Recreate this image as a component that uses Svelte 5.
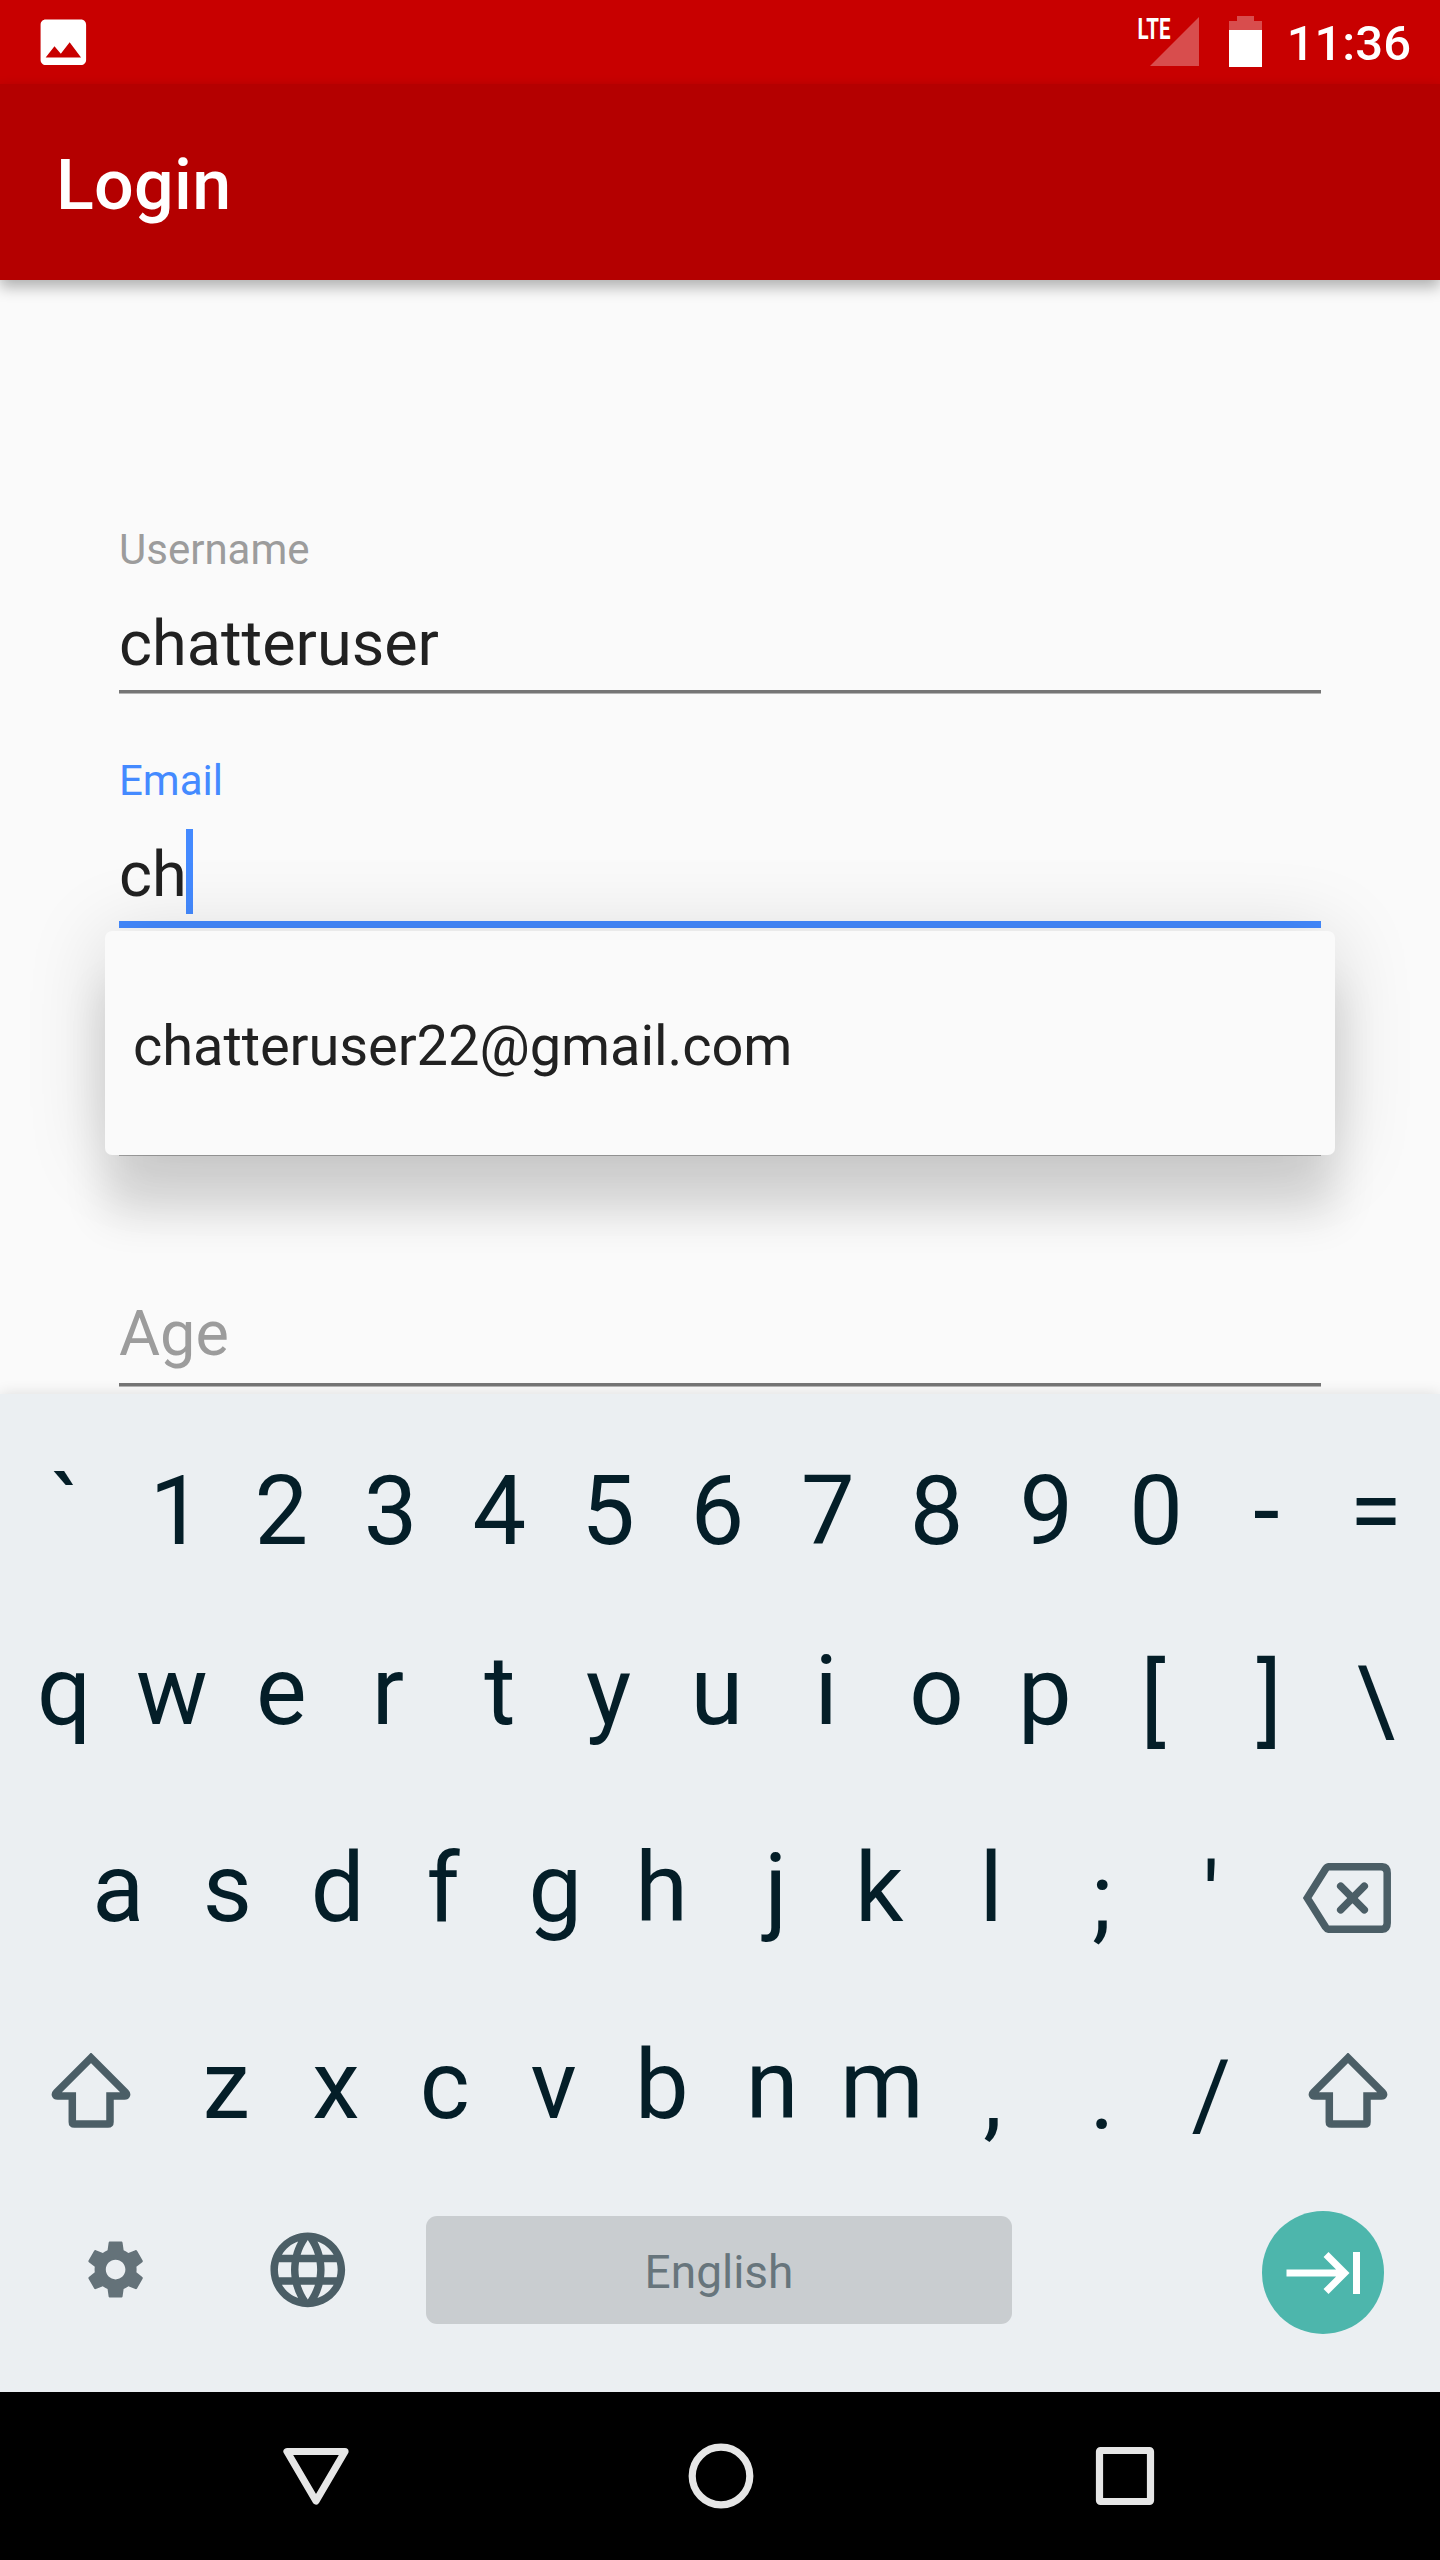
<script>
  const fields = [
    { label: 'Username', value: 'chatteruser' },
    { label: 'Email', value: 'ch', focused: true },
    {},
    { hint: 'Age' },
  ];

  const rows = [
    ['`', '1', '2', '3', '4', '5', '6', '7', '8', '9', '0', '-', '='],
    ['q', 'w', 'e', 'r', 't', 'y', 'u', 'i', 'o', 'p', '[', ']', '\\'],
    ['a', 's', 'd', 'f', 'g', 'h', 'j', 'k', 'l', ';', "'", 'backspace'],
    ['shift', 'z', 'x', 'c', 'v', 'b', 'n', 'm', ',', '.', '/', 'shift'],
  ];

  // Punctuation outside the number row is centred a little lower than letters.
  const isLow = (key) => "[]\\;',./".includes(key);

  const nudges = {
    '`': 1.5, 1: 3, 2: -1.5, 3: -1.5, 4: -2, 5: -2.5, 6: -2.5, 7: -1.5, 8: -2, 9: -1.5, 0: -1,
    w: -1.5, e: -1.5, r: -4, t: -1.5, y: -2, u: -3, i: -3, o: -2, p: -3, '[': -4, ']': 3,
    d: 1, f: -3, h: -3, j: 2, k: -4, l: -1.5,
    z: -1.5, x: -1, c: -1.5, v: -2, b: -3, n: -2, m: -1.5,
  };
</script>

<div class="screen">
  <header class="status">
    <svg class="picture" viewBox="0 0 24 24"><path fill="#fff" d="M21 19V5c0-1.1-.9-2-2-2H5c-1.1 0-2 .9-2 2v14c0 1.1.9 2 2 2h14c1.1 0 2-.9 2-2zM8.500 13.500l2.500 3.010L14.500 12l4.500 6H5l3.500-4.500z" /></svg>
    <svg class="signal" viewBox="0 0 64 84">
      <path fill="#fff" fill-opacity=".3" d="M62 17v49H13z" />
      <text x="0.500" y="39" textLength="33" lengthAdjust="spacingAndGlyphs">LTE</text>
    </svg>
    <svg class="battery" viewBox="0 0 33 84">
      <path fill="#fff" fill-opacity=".3" d="M8 16h17v5h8v9H0v-9h8z" />
      <path fill="#fff" d="M0 30h33v37H0z" />
    </svg>
    <span class="clock">11:36</span>
  </header>

  <div class="appbar"><h1>Login</h1></div>

  <main>
    {#each fields as field}
      <div class="field" class:focused={field.focused}>
        {#if field.label}<div class="label">{field.label}</div>{/if}
        {#if field.value}
          <div class="value">{field.value}{#if field.focused}<i class="caret"></i>{/if}</div>
        {/if}
        {#if field.hint}<div class="value hint">{field.hint}</div>{/if}
        <div class="line"></div>
      </div>
    {/each}
    <div class="popup">chatteruser22@gmail.com</div>
  </main>

  <section class="keyboard">
    {#each rows as row, r}
      <div class="row row{r}">
        {#each row as key}
          {#if key === 'shift'}
            <div class="key wide">
              <svg class="shift" viewBox="0 0 80 76"><path d="M40 4.800 5.500 39.300C3.500 41.300 4.500 43 6.500 43H21.300V69Q21.300 71 23.300 71H57Q59 71 59 69V43H73.500C75.500 43 76.500 41.300 74.500 39.300Z" /></svg>
            </div>
          {:else if key === 'backspace'}
            <div class="key wide">
              <svg class="backspace" viewBox="0 0 88 70">
                <path d="M26 3.700H78Q84.200 3.700 84.200 10V60Q84.200 66.300 78 66.300H26Q24 66.300 22.500 64L4.200 35 22.500 6Q24 3.700 26 3.700Z" />
                <path d="M37.700 23.200 61.300 46.800M61.300 23.200 37.700 46.800" />
              </svg>
            </div>
          {:else}
            <div class="key" class:low={isLow(key)} style:--nudge="{nudges[key] ?? 0}px">{key}</div>
          {/if}
        {/each}
      </div>
    {/each}
    <div class="row tools">
      <div class="tool settings">
        <svg viewBox="0 0 24 24"><path d="M19.430 12.980c.04-.32.07-.64.07-.98s-.03-.66-.07-.98l2.110-1.650c.19-.15.24-.42.12-.64l-2-3.460c-.12-.22-.39-.3-.61-.22l-2.490 1c-.52-.4-1.080-.73-1.690-.98l-.38-2.650C14.460 2.180 14.250 2 14 2h-4c-.25 0-.46.18-.49.42l-.38 2.650c-.61.25-1.170.59-1.690.98l-2.490-1c-.23-.09-.49 0-.61.22l-2 3.460c-.13.22-.07.49.12.64l2.110 1.650c-.04.32-.07.65-.07.98s.03.66.07.98l-2.110 1.650c-.19.15-.24.42-.12.64l2 3.460c.12.22.39.3.61.22l2.490-1c.52.4 1.080.73 1.690.98l.38 2.650c.03.24.24.42.49.42h4c.25 0 .46-.18.49-.42l.38-2.650c.61-.25 1.170-.59 1.690-.98l2.490 1c.23.09.49 0 .61-.22l2-3.460c.12-.22.07-.49-.12-.64l-2.110-1.650zM12 15.500c-1.930 0-3.500-1.570-3.500-3.500s1.570-3.500 3.500-3.500 3.500 1.570 3.500 3.500-1.570 3.500-3.500 3.500z" /></svg>
      </div>
      <div class="tool globe">
        <svg viewBox="0 0 24 24"><path d="M11.990 2C6.470 2 2 6.480 2 12s4.470 10 9.990 10C17.520 22 22 17.520 22 12S17.520 2 11.990 2zm6.930 6h-2.950c-.32-1.250-.78-2.450-1.380-3.560 1.840.63 3.370 1.910 4.330 3.560zM12 4.040c.83 1.200 1.480 2.530 1.910 3.960h-3.820c.43-1.430 1.080-2.760 1.910-3.960zM4.260 14C4.100 13.360 4 12.690 4 12s.1-1.360.26-2h3.380c-.08.66-.14 1.320-.14 2 0 .68.06 1.340.14 2H4.260zm.82 2h2.950c.32 1.250.78 2.450 1.380 3.560-1.840-.63-3.370-1.900-4.330-3.560zm2.950-8H5.080c.96-1.660 2.490-2.930 4.330-3.560C8.810 5.550 8.350 6.750 8.030 8zM12 19.960c-.83-1.200-1.480-2.530-1.910-3.960h3.820c-.43 1.430-1.080 2.760-1.910 3.960zM14.340 14H9.660c-.09-.66-.16-1.320-.16-2 0-.68.07-1.350.16-2h4.680c.09.65.16 1.320.16 2 0 .68-.07 1.340-.16 2zm.25 5.560c.6-1.110 1.060-2.310 1.380-3.560h2.950c-.96 1.650-2.490 2.930-4.330 3.560zM16.360 14c.08-.66.14-1.320.14-2 0-.68-.06-1.340-.14-2h3.380c.16.64.26 1.310.26 2s-.1 1.360-.26 2h-3.380z" /></svg>
      </div>
      <div class="space">English</div>
      <div class="next">
        <svg viewBox="0 0 24 24"><path fill="#fff" d="M11.590 7.410 15.170 11H1v2h14.170l-3.590 3.590L13 18l6-6-6-6-1.410 1.410zM20 6v12h2V6h-2z" /></svg>
      </div>
    </div>
  </section>

  <nav>
    <svg viewBox="0 0 76 76"><path d="M9 13.500H67L38 63Z" /></svg>
    <svg viewBox="0 0 76 76"><circle cx="38" cy="38" r="28.800" /></svg>
    <svg viewBox="0 0 76 76"><rect x="12.500" y="12.500" width="51" height="51" rx="1" /></svg>
  </nav>
</div>

<style>
  :global(body) {
    margin: 0;
  }
  .screen {
    width: 1440px;
    height: 2560px;
    display: flex;
    flex-direction: column;
    overflow: hidden;
    background: #fafafa;
    font-family: Roboto, 'Liberation Sans', sans-serif;
  }
  svg {
    display: block;
    flex: none;
  }
  .status {
    height: 84px;
    flex: none;
    box-sizing: border-box;
    padding: 0 29px 0 33px;
    display: flex;
    align-items: center;
    background: #c80000;
    color: #fff;
  }
  .picture {
    width: 60.700px;
    height: 60.700px;
    margin-right: auto;
  }
  .signal {
    width: 64px;
    height: 84px;
    margin-right: 28px;
  }
  .signal text {
    fill: #fff;
    font: 700 29.500px Roboto, sans-serif;
  }
  .battery {
    width: 33px;
    height: 84px;
    margin-right: 24.500px;
  }
  .clock {
    font-size: 49px;
    font-weight: 500;
    line-height: 88px;
    height: 84px;
  }
  .appbar {
    height: 196px;
    flex: none;
    position: relative;
    z-index: 1;
    background: #b40000;
    color: #fff;
    box-shadow: 0 7px 14px rgba(0, 0, 0, 0.3);
  }
  h1 {
    margin: 0;
    padding: 3px 56px 0;
    font-size: 70px;
    font-weight: 500;
    line-height: 196px;
    letter-spacing: 0.300px;
  }
  main {
    position: relative;
    height: 1114px;
    flex: none;
    box-sizing: border-box;
    padding: 183px 119px 0;
  }
  .field {
    height: 231px;
    display: flex;
    flex-direction: column;
    justify-content: flex-end;
  }
  .label {
    font-size: 42px;
    line-height: 50px;
    margin-bottom: 27px;
    color: #9c9c9c;
  }
  .value {
    display: flex;
    font-size: 63px;
    line-height: 84px;
    height: 84px;
    margin-bottom: 4px;
    color: #212121;
  }
  .hint {
    color: #9c9c9c;
    margin-bottom: 7px;
  }
  .caret {
    width: 7px;
    height: 85px;
    margin: -4px 0 0 -1px;
    background: #448aff;
  }
  .line {
    height: 3px;
    background: #757575;
    border-bottom: 1px solid #b4b4b4;
  }
  .focused .label {
    color: #448aff;
  }
  .focused .line {
    height: 7px;
    border: 0;
    margin-bottom: -3px;
    background: #448aff;
  }
  .popup {
    position: absolute;
    left: 105px;
    top: 651px;
    width: 1230px;
    height: 224px;
    box-sizing: border-box;
    padding-left: 28px;
    border-radius: 7px;
    background: #fafafa;
    color: #212121;
    font-size: 56px;
    line-height: 231px;
    letter-spacing: -0.070px;
    box-shadow:
      0 6px 80px rgba(0, 0, 0, 0.15),
      0 60px 44px rgba(0, 0, 0, 0.12);
  }
  .keyboard {
    position: relative;
    height: 998px;
    flex: none;
    box-sizing: border-box;
    padding: 27px 9.500px 0;
    background: #ebeff2;
    color: #041e28;
    box-shadow: 0 0 14px rgba(0, 0, 0, 0.12);
  }
  .row {
    display: flex;
    height: 197px;
  }
  .row0,
  .row1 {
    height: 180px;
  }
  .row1 {
    margin-bottom: 9px;
  }
  .row2 {
    padding-left: 54px;
  }
  .key {
    flex: 0 0 109.300px;
    box-sizing: border-box;
    text-align: center;
    font-size: 95.500px;
    line-height: 197px;
    transform: translateX(var(--nudge, 0));
  }
  .row0 .key,
  .row1 .key {
    line-height: 180px;
  }
  .low {
    padding-top: 10px;
  }
  .wide {
    flex-basis: 163.500px;
    display: flex;
    align-items: center;
    justify-content: center;
  }
  .shift,
  .backspace {
    fill: none;
    stroke: #4b5e66;
    stroke-width: 7.500px;
  }
  .shift {
    width: 80px;
    height: 76px;
    margin-top: 11px;
  }
  .backspace {
    width: 88px;
    height: 70px;
    margin: 19px 2px 0 0;
    stroke-linecap: round;
  }
  .tools {
    height: 172px;
    align-items: center;
  }
  .tool {
    display: flex;
    justify-content: center;
  }
  .settings {
    width: 212px;
  }
  .settings svg {
    width: 67.200px;
    height: 67.200px;
    fill: #647279;
  }
  .globe {
    width: 173px;
  }
  .globe svg {
    width: 89.600px;
    height: 89.600px;
    fill: #4b5e66;
  }
  .space {
    width: 586px;
    height: 108px;
    margin-left: 31.500px;
    border-radius: 11px;
    background: #c9cdd0;
    color: #67757c;
    font-size: 46px;
    line-height: 112px;
    text-align: center;
  }
  .next {
    width: 122.500px;
    height: 122.500px;
    margin: 5px 0 0 249.500px;
    display: flex;
    align-items: center;
    justify-content: center;
    border-radius: 50%;
    background: #4db6ac;
  }
  .next svg {
    width: 84px;
    height: 84px;
    margin: 1px 0 0 4px;
  }
  nav {
    position: relative;
    height: 168px;
    flex: none;
    box-sizing: border-box;
    padding: 0 277px 0 278px;
    display: flex;
    align-items: center;
    justify-content: space-between;
    background: #000;
  }
  nav svg {
    width: 76px;
    height: 76px;
    fill: none;
    stroke: #e6e6e6;
    stroke-width: 7.200px;
    stroke-linejoin: round;
  }
</style>
